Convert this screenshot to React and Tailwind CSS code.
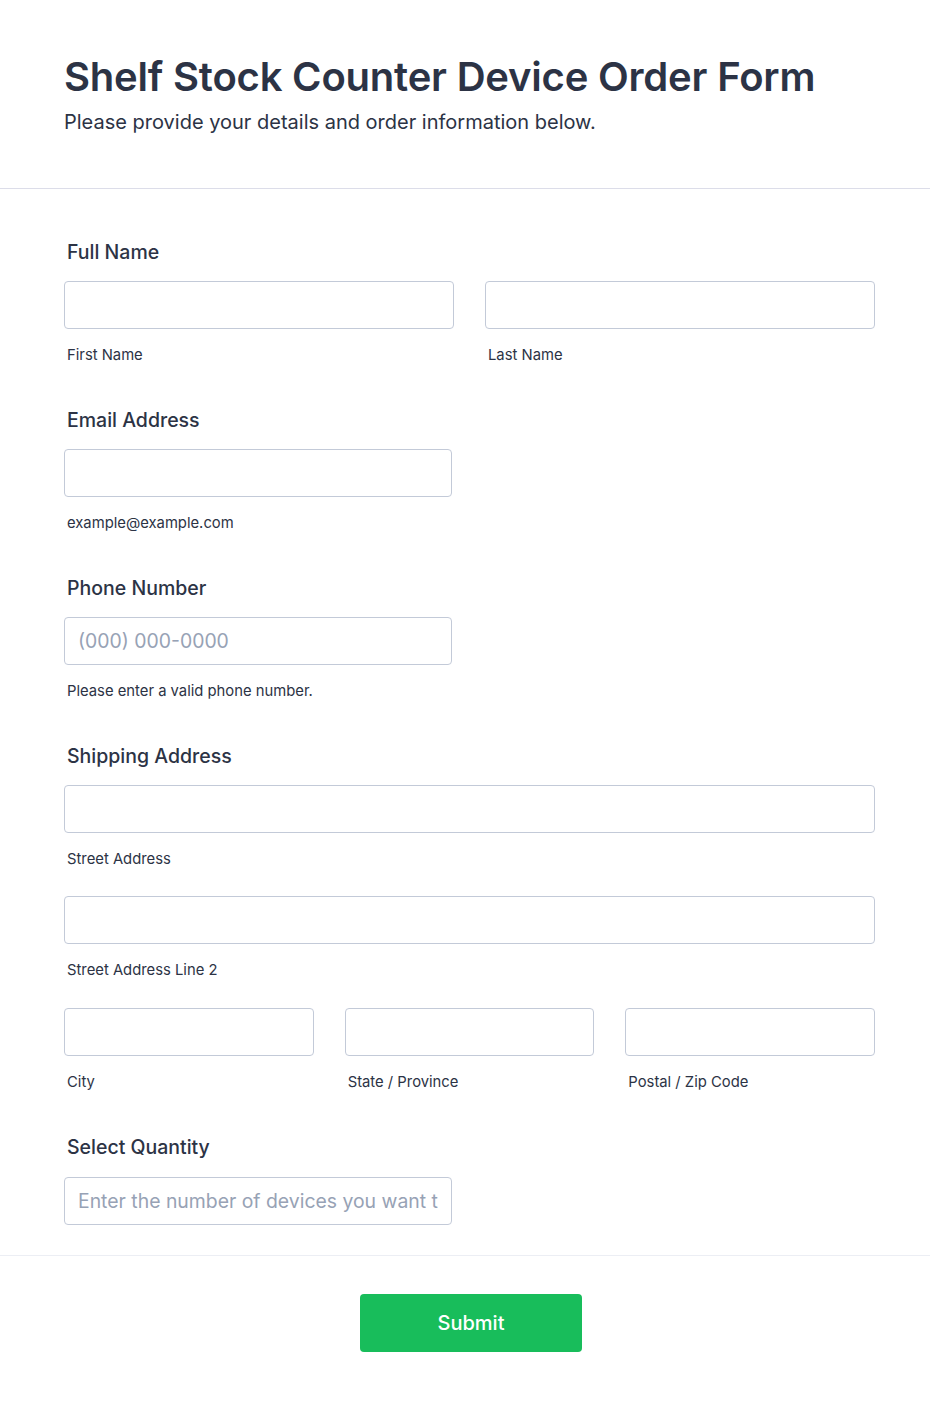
import React from 'react';

const font = { fontFamily: 'Inter, "Noto Sans", sans-serif' };

const Label = ({ children }) => (
  <div className="pl-[3px] text-[19.5px] leading-6 font-medium text-[#2c3345]">{children}</div>
);

const Sub = ({ children }) => (
  <div className="mt-[16px] pl-[3px] text-[14.8px] leading-5 text-[#2c3345]">{children}</div>
);

const Field = ({ placeholder }) => (
  <input
    type="text"
    placeholder={placeholder}
    className="block h-12 w-full rounded-[4px] border border-[#c3cad8] bg-white px-[13px] text-[19.4px] text-[#2c3345] outline-none placeholder:text-[#97a2b5]"
  />
);

const App = () => {
  return (
    <div className="min-h-[1402px] w-[930px] bg-white" style={font}>
      <header className="border-b border-[#dcdde9] px-16 pt-[53px] pb-[52px]">
        <h1 className="text-[40px] leading-[48px] font-semibold tracking-[-0.2px] text-[#2c3345]">
          Shelf Stock Counter Device Order Form
        </h1>
        <p className="mt-[7px] text-[20px] leading-7 text-[#2c3345]">
          Please provide your details and order information below.
        </p>
      </header>

      <main className="pl-16 pr-[55px] pt-[51px] pb-[30px]">
        <section>
          <Label>Full Name</Label>
          <div className="mt-[17px] grid grid-cols-2 gap-[31px]">
            <div>
              <Field />
              <Sub>First Name</Sub>
            </div>
            <div>
              <Field />
              <Sub>Last Name</Sub>
            </div>
          </div>
        </section>

        <section className="mt-[43px]">
          <Label>Email Address</Label>
          <div className="mt-[17px] w-[388px]">
            <Field />
            <Sub>example@example.com</Sub>
          </div>
        </section>

        <section className="mt-[43px]">
          <Label>Phone Number</Label>
          <div className="mt-[17px] w-[388px]">
            <Field placeholder="(000) 000-0000" />
            <Sub>Please enter a valid phone number.</Sub>
          </div>
        </section>

        <section className="mt-[43px]">
          <Label>Shipping Address</Label>
          <div className="mt-[17px]">
            <Field />
            <Sub>Street Address</Sub>
          </div>
          <div className="mt-[27px]">
            <Field />
            <Sub>Street Address Line 2</Sub>
          </div>
          <div className="mt-[28px] grid grid-cols-3 gap-[31px]">
            <div>
              <Field />
              <Sub>City</Sub>
            </div>
            <div>
              <Field />
              <Sub>State / Province</Sub>
            </div>
            <div>
              <Field />
              <Sub>Postal / Zip Code</Sub>
            </div>
          </div>
        </section>

        <section className="mt-[43px]">
          <Label>Select Quantity</Label>
          <div className="mt-[18px] w-[388px]">
            <Field placeholder="Enter the number of devices you want to order" />
          </div>
        </section>
      </main>

      <footer className="flex justify-center border-t border-[#eceef4] pt-[38px] pb-12">
        <button
          type="button"
          className="ml-[12px] h-[58px] w-[222px] rounded-[4px] bg-[#18bd5b] text-[20px] font-medium text-white"
        >
          Submit
        </button>
      </footer>
    </div>
  );
};

export default App;
